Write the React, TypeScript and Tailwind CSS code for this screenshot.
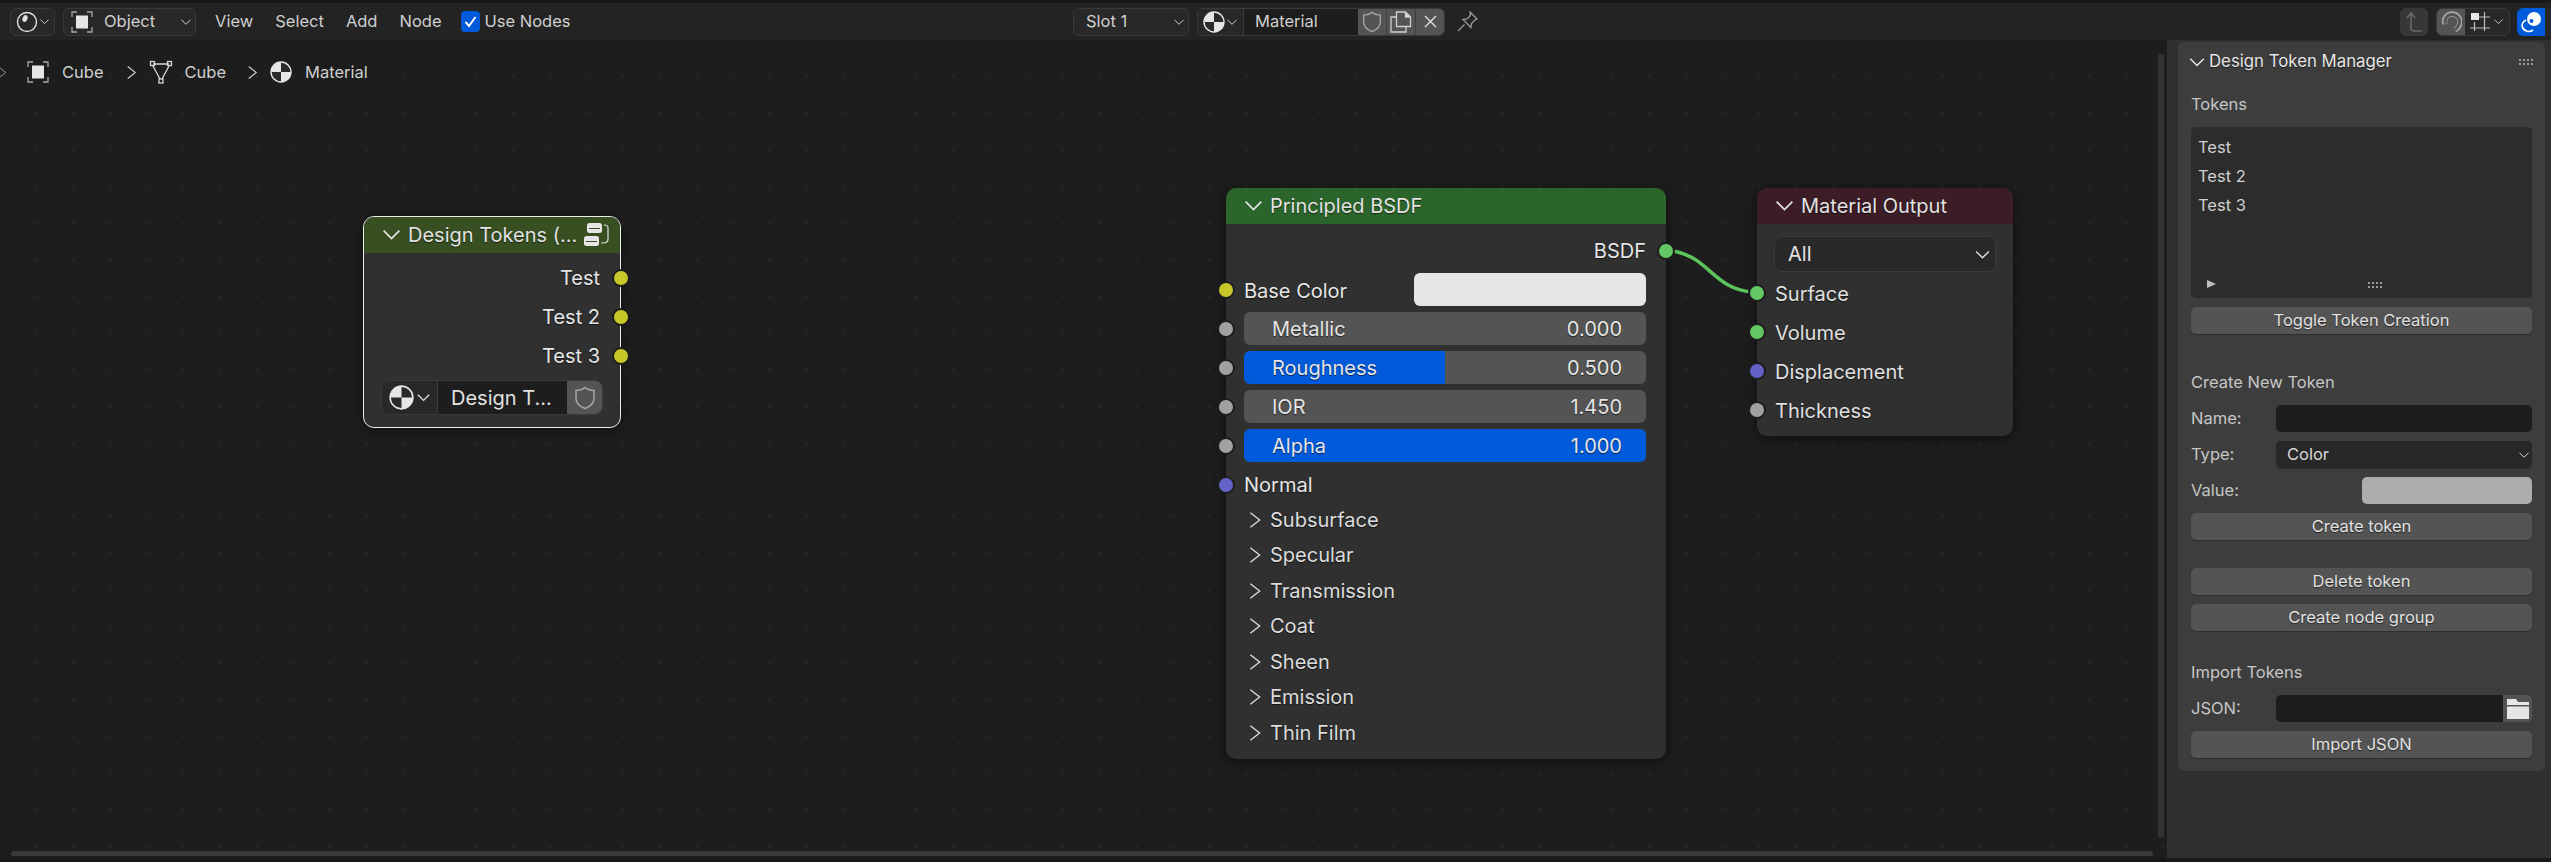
import type { ReactNode } from "react";

const shadow = "[text-shadow:0_1px_1px_rgba(0,0,0,0.6)]";

function Chevron({ dir = "down", size = 12, className = "" }: { dir?: "down" | "right"; size?: number; className?: string }) {
  return (
    <svg width={size} height={size} viewBox="0 0 12 12" fill="none" stroke="currentColor" strokeWidth="1" className={`shrink-0 ${className}`}>
      {dir === "down" ? <path d="M1.5 3.8 6 8.3l4.5-4.5" /> : <path d="M2.5.5 9.500 6l-7 5.500" />}
    </svg>
  );
}

function ObjectIcon() {
  return (
    <svg width="22" height="22" viewBox="0 0 22 22" fill="none" stroke="#a8a8a8" strokeWidth="1.3" className="shrink-0">
      <rect x="5" y="4.5" width="12" height="13" fill="#e6e6e6" stroke="none" />
      <path d="M1 6V1h5M16 1h5v5M1 16v5h5M16 21h5v-5" />
    </svg>
  );
}

function EditorIcon() {
  return (
    <svg width="22" height="22" viewBox="0 0 22 22" fill="none" stroke="#e0e0e0" strokeWidth="1.4" className="shrink-0">
      <circle cx="11" cy="11" r="9.5" />
      <ellipse cx="9" cy="7.5" rx="2.5" ry="3.5" fill="#e0e0e0" stroke="none" transform="rotate(20 9 7.5)" />
    </svg>
  );
}

function MeshIcon() {
  return (
    <svg width="24" height="24" viewBox="0 0 24 24" fill="none" stroke="#d8d8d8" strokeWidth="1.3" className="shrink-0">
      <path d="M4 4h16M4 6l7 13M20 6l-7 13" />
      <rect x="1.5" y="1.5" width="4" height="4" />
      <rect x="18.5" y="1.5" width="4" height="4" />
      <rect x="10" y="19" width="4" height="4" />
    </svg>
  );
}

function MaterialIcon({ size = 22 }: { size?: number }) {
  return (
    <svg width={size} height={size} viewBox="0 0 22 22" className="shrink-0">
      <circle cx="11" cy="11" r="10" fill="#2a2a2a" stroke="#e6e6e6" strokeWidth="1.4" />
      <path d="M11 11V1A10 10 0 0 0 1 11zM11 11v10a10 10 0 0 0 10-10z" fill="#e6e6e6" />
    </svg>
  );
}

function ShieldIcon({ size = 22 }: { size?: number }) {
  return (
    <svg width={size} height={size} viewBox="0 0 22 24" fill="none" stroke="#a6a6a6" strokeWidth="1.5" className="shrink-0">
      <path d="M11 1.5c2.5 2 6 3 9 3v8c0 4.5-4 8-9 10-5-2-9-5.500-9-10v-8c3 0 6.500-1 9-3z" />
    </svg>
  );
}

function CopyIcon() {
  return (
    <svg width="22" height="22" viewBox="0 0 22 22" fill="none" stroke="#d0d0d0" strokeWidth="1.3" className="shrink-0">
      <path d="M6.500 15.500V1h9l5 5v9.500z" />
      <path d="M15.500 1v5h5" fill="#d0d0d0" />
      <path d="M6.500 6H1v15h15v-5.500" />
    </svg>
  );
}

function CloseIcon() {
  return (
    <svg width="13" height="13" viewBox="0 0 13 13" fill="none" stroke="#e0e0e0" strokeWidth="1.4" className="shrink-0">
      <path d="M1 1l11 11M12 1 1 12" />
    </svg>
  );
}

function PinIcon() {
  return (
    <svg width="21" height="21" viewBox="0 0 21 21" fill="none" stroke="#9a9a9a" strokeWidth="1.3" className="shrink-0">
      <path d="M13 1l7 7-2 1-3.500 3.500-.5 4-8-8 4-.5L13.500 4.500z" />
      <path d="M7.500 13.500 1 20" />
    </svg>
  );
}

function GroupIcon() {
  return (
    <svg width="26" height="26" viewBox="0 0 26 26" fill="none" className="shrink-0">
      <rect x="4" y="1" width="15" height="10" rx="2.500" fill="#e6e6e6" />
      <rect x="1" y="14" width="15" height="10" rx="2.500" fill="#e6e6e6" />
      <path d="M6 6.500h11M3 19.500h11" stroke="#384f22" strokeWidth="1.200" />
      <path d="M21 3c3 0 4 1 4 3v11c0 3-2 4-5 4h-2" stroke="#e0e0e0" strokeWidth="1.200" />
    </svg>
  );
}

function Grip() {
  return (
    <div className="grid grid-cols-4 gap-x-[2px] gap-y-[2px]">
      {Array.from({ length: 8 }).map((_, i) => (
        <span key={i} className="h-[2px] w-[2px] bg-[#9a9a9a]" />
      ))}
    </div>
  );
}

function Socket({ color, className }: { color: string; className: string }) {
  return (
    <span
      className={`absolute top-1/2 h-[18px] w-[18px] -translate-y-1/2 rounded-full border-[2px] border-[#1d1d1d] ${className}`}
      style={{ backgroundColor: color }}
    />
  );
}

const yellow = "#c7c729";
const gray = "#a1a1a1";
const purple = "#6363c7";
const green = "#63c763";

function NodeHeader({ color, title, children }: { color: string; title: string; children?: ReactNode }) {
  return (
    <div
      className={`flex h-9 items-center gap-[6px] rounded-t-[10px] pb-px pl-[17px] pr-[14px] text-[20px] text-[#e2e2e2] ${shadow}`}
      style={{ backgroundColor: color }}
    >
      <Chevron size={21} />
      <span className="flex-1 whitespace-nowrap">{title}</span>
      {children}
    </div>
  );
}

function Slider({ label, value, fill }: { label: string; value: string; fill: number }) {
  return (
    <div className="relative h-[33px] rounded-[6px] bg-[#545454]">
      <div className="absolute inset-0 overflow-hidden rounded-[6px]">
        <div className="h-full bg-[#005ada]" style={{ width: `${fill * 100}%` }} />
      </div>
      <div className={`relative flex h-full items-center justify-between pl-7 pr-6 pt-px text-[#e6e6e6] ${shadow}`}>
        <span>{label}</span>
        <span>{value}</span>
      </div>
      <Socket color={gray} className="left-[-27px]" />
    </div>
  );
}

function DesignTokensNode() {
  return (
    <div className="absolute left-[363px] top-[176px] h-[212px] w-[258px] rounded-[11px] border-[1.5px] border-[#ececec] bg-[#303030] shadow-[0_2px_10px_rgba(0,0,0,0.5)]">
      <NodeHeader color="#384f22" title="Design Tokens (...">
        <GroupIcon />
      </NodeHeader>
      <div className={`flex flex-col items-end pr-5 pt-[5px] text-[20px] text-[#e6e6e6] ${shadow}`}>
        {["Test", "Test 2", "Test 3"].map((t) => (
          <div key={t} className="relative flex h-[39px] w-full items-center justify-end">
            <span>{t}</span>
            <Socket color={yellow} className="right-[-30px]" />
          </div>
        ))}
      </div>
      <div className="mx-[17px] mt-[5px] flex h-[35px] overflow-hidden rounded-[8px] border border-[#3a3a3a] text-[20px] text-[#e2e2e2]">
        <div className="flex w-[55px] items-center justify-center gap-[2px] bg-[#282828]">
          <MaterialIcon size={25} />
          <Chevron size={15} />
        </div>
        <div className="flex flex-1 items-center border-l border-[#3a3a3a] bg-[#1d1d1d] pl-[13px]">Design T...</div>
        <div className="flex w-[35px] items-center justify-center bg-[#545454]">
          <ShieldIcon size={24} />
        </div>
      </div>
    </div>
  );
}

function PrincipledNode() {
  const panels = ["Subsurface", "Specular", "Transmission", "Coat", "Sheen", "Emission", "Thin Film"];
  return (
    <div className="absolute left-[1226px] top-[148px] h-[571px] w-[440px] rounded-[10px] bg-[#303030] text-[20px] shadow-[0_2px_12px_rgba(0,0,0,0.55)]">
      <NodeHeader color="#2b652b" title="Principled BSDF" />
      <div className={`flex flex-col gap-[6px] pl-[18px] pr-5 pt-[10px] text-[#e6e6e6] ${shadow}`}>
        <div className="relative flex h-[33px] items-center justify-end pt-px">
          <span>BSDF</span>
          <Socket color={green} className="right-[-29px]" />
        </div>
        <div className="relative flex h-[33px] items-center justify-between pt-[2px]">
          <span>Base Color</span>
          <div className="-mt-[2px] h-[33px] w-[232px] rounded-[6px] bg-[#e6e6e6]" />
          <Socket color={yellow} className="left-[-27px]" />
        </div>
        <Slider label="Metallic" value="0.000" fill={0} />
        <Slider label="Roughness" value="0.500" fill={0.5} />
        <Slider label="IOR" value="1.450" fill={0} />
        <Slider label="Alpha" value="1.000" fill={1} />
        <div className="relative flex h-[33px] items-center pt-px">
          <span>Normal</span>
          <Socket color={purple} className="left-[-27px]" />
        </div>
      </div>
      <div className={`mt-px flex flex-col pl-[21px] text-[#dcdcdc] ${shadow}`}>
        {panels.map((p) => (
          <div key={p} className="flex h-[35.5px] items-center gap-[7px]">
            <Chevron dir="right" size={16} />
            <span>{p}</span>
          </div>
        ))}
      </div>
    </div>
  );
}

function OutputNode() {
  return (
    <div className="absolute left-[1757px] top-[148px] h-[248px] w-[256px] rounded-[10px] bg-[#303030] text-[20px] shadow-[0_2px_12px_rgba(0,0,0,0.55)]">
      <NodeHeader color="#3c1d26" title="Material Output" />
      <div className="mx-[17px] mt-3 flex h-[36px] items-center justify-between rounded-[8px] border border-[#3a3a3a] bg-[#282828] pl-[13px] pr-[4px] text-[#e2e2e2]">
        <span>All</span>
        <Chevron size={17} />
      </div>
      <div className={`mt-[1px] flex flex-col pl-[18px] text-[#e0e0e0] ${shadow}`}>
        {[
          ["Surface", green],
          ["Volume", green],
          ["Displacement", purple],
          ["Thickness", gray],
        ].map(([label, color]) => (
          <div key={label} className="relative flex h-[39px] items-center pt-[2px]">
            <span>{label}</span>
            <Socket color={color} className="left-[-27px]" />
          </div>
        ))}
      </div>
    </div>
  );
}

function HeaderBar() {
  return (
    <header className="flex h-[37px] items-center bg-[#232323] text-[16.500px] text-[#cfcfcf]">
      <div className="flex w-[1073px] items-center pl-[10px]">
        <div className="flex h-7 w-[45px] items-center justify-center gap-[1px] rounded-[6px] border border-[#393939] bg-[#282828]">
          <EditorIcon />
          <Chevron size={11} />
        </div>
        <div className="ml-2 flex h-7 w-[133px] items-center rounded-[6px] border border-[#393939] bg-[#282828] pl-[7px] pr-[3px]">
          <ObjectIcon />
          <span className="ml-[11px] flex-1">Object</span>
          <Chevron size={12} />
        </div>
        <nav className="ml-[19px] flex gap-[22px]">
          <span>View</span>
          <span>Select</span>
          <span>Add</span>
          <span>Node</span>
        </nav>
        <div className="ml-[19px] flex h-[21px] w-[19px] items-center justify-center rounded-[4px] bg-[#005ada]">
          <svg width="13" height="13" viewBox="0 0 13 13" fill="none" stroke="#fff" strokeWidth="2">
            <path d="M1.500 7l3.500 4 6.500-9" />
          </svg>
        </div>
        <span className="ml-[5px]">Use Nodes</span>
      </div>
      <div className="flex h-7 w-[116px] items-center justify-between rounded-[6px] border border-[#393939] bg-[#282828] pl-3 pr-[3px]">
        <span>Slot 1</span>
        <Chevron size={12} />
      </div>
      <div className="ml-2 flex h-7 w-[248px] overflow-hidden rounded-[6px] border border-[#393939]">
        <div className="flex w-[45px] items-center justify-center gap-[1px] bg-[#282828]">
          <MaterialIcon />
          <Chevron size={12} />
        </div>
        <div className="flex w-[115px] items-center border-l border-[#393939] bg-[#1d1d1d] pl-[11px]">Material</div>
        <div className="flex flex-1 bg-[#545454]">
          <div className="flex flex-1 items-center justify-center"><ShieldIcon /></div>
          <div className="flex flex-1 items-center justify-center border-l border-[#3f3f3f]"><CopyIcon /></div>
          <div className="flex flex-1 items-center justify-center border-l border-[#3f3f3f]"><CloseIcon /></div>
        </div>
      </div>
      <div className="ml-3"><PinIcon /></div>
      <div className="ml-auto flex items-center">
        <div className="flex h-7 w-7 items-center justify-center rounded-[6px] bg-[#373737]">
          <svg width="20" height="22" viewBox="0 0 20 22" fill="none" stroke="#6a6a6a" strokeWidth="1.500">
            <path d="M3 7l4-5 4 5M7 2v15c0 2 1 3 3 3h8" />
          </svg>
        </div>
        <div className="ml-2 flex h-7 w-[74px] overflow-hidden rounded-[6px] border border-[#393939] bg-[#282828]">
          <div className="flex w-7 items-center justify-center bg-[#545454]">
            <svg width="22" height="22" viewBox="0 0 22 22" fill="none">
              <path d="M5 13C3 7 8 3 12 3c5 0 8 4 8 8 0 3-2 6-5 8" stroke="#a6a6a6" strokeWidth="5.500" />
              <path d="M5.400 12.500C4 7.500 8 3.500 12 3.500c4.500 0 7.500 3.500 7.500 7.500 0 3-2 5.500-4.500 7.500" stroke="#545454" strokeWidth="3" />
            </svg>
          </div>
          <div className="flex flex-1 items-center justify-center gap-[2px]">
            <svg width="21" height="20" viewBox="0 0 21 20" fill="none" stroke="#bdbdbd" strokeWidth="1.200">
              <rect x="1" y="1" width="8" height="7" fill="#e6e6e6" stroke="none" />
              <path d="M9 5h11M0 16h20M4.500 10v9M14.500 0v19" />
            </svg>
            <Chevron size={11} />
          </div>
        </div>
        <div className="ml-[7px] flex h-7 w-[34px] overflow-hidden rounded-l-[6px]">
          <div className="flex w-7 items-center justify-center bg-[#005ada]">
            <svg width="22" height="22" viewBox="0 0 22 22" fill="none" stroke="#fff" strokeWidth="1.600">
              <path d="M2 15a7 7 0 0 0 11 4" />
              <path d="M2 15a7 7 0 0 1 4-6" />
              <circle cx="14" cy="8" r="7" fill="#fff" stroke="none" />
              <circle cx="11.500" cy="10" r="2" fill="#005ada" stroke="none" />
            </svg>
          </div>
          <div className="flex-1 bg-[#282828]" />
        </div>
      </div>
    </header>
  );
}

function Breadcrumbs() {
  return (
    <div className="absolute left-0 top-[21px] flex h-[22px] items-center text-[16.500px] text-[#cfcfcf]">
      <Chevron dir="right" size={11} className="-ml-[3px] text-[#9a9a9a]" />
      <div className="ml-[19px]"><ObjectIcon /></div>
      <span className="ml-[13px]">Cube</span>
      <Chevron dir="right" size={13} className="ml-[21px]" />
      <div className="ml-[11px]"><MeshIcon /></div>
      <span className="ml-[12px]">Cube</span>
      <Chevron dir="right" size={13} className="ml-[20px]" />
      <div className="ml-[11px]"><MaterialIcon /></div>
      <span className="ml-[13px]">Material</span>
    </div>
  );
}

function Button({ label }: { label: string }) {
  return (
    <div className={`flex h-[27px] items-center justify-center rounded-[5px] bg-[#545454] text-[#e2e2e2] shadow-[0_1px_1px_rgba(0,0,0,0.25)] ${shadow}`}>
      {label}
    </div>
  );
}

function FieldRow({ label, children }: { label: string; children: ReactNode }) {
  return (
    <div className="flex h-[27px] items-center">
      <span className="w-[85px] shrink-0 text-[#c6c6c6]">{label}</span>
      <div className="flex h-full flex-1 justify-end">{children}</div>
    </div>
  );
}

function Sidebar() {
  return (
    <aside className="w-[384px] shrink-0 bg-[#303030] pl-[11px] pr-[6px] pt-[2px]">
      <div className="flex flex-col rounded-[6px] bg-[#3d3d3d] px-[13px] pb-[13px] text-[16.500px]">
        <div className={`-mx-[1px] flex h-[38px] items-center pt-[2px] text-[16.800px] text-[#e6e6e6] ${shadow}`}>
          <Chevron size={18} className="-ml-[2px]" />
          <span className="ml-[3px] flex-1">Design Token Manager</span>
          <Grip />
        </div>
        <div className="mt-[11px] flex h-[27px] items-center text-[#c6c6c6]">Tokens</div>
        <div className="relative mt-[9px] h-[171px] rounded-[5px] bg-[#2c2c2c] pl-[7px] pt-[6px] text-[#cfcfcf]">
          <div className="flex h-[29px] items-center">Test</div>
          <div className="flex h-[29px] items-center">Test 2</div>
          <div className="flex h-[29px] items-center">Test 3</div>
          <div className="absolute bottom-[10px] left-4 h-0 w-0 border-y-[4px] border-l-[9px] border-y-transparent border-l-[#bdbdbd]" />
          <div className="absolute bottom-[10px] left-[177px]"><Grip /></div>
        </div>
        <div className="mt-[9px]"><Button label="Toggle Token Creation" /></div>
        <div className="mt-[35px] flex h-[27px] items-center text-[#c6c6c6]">Create New Token</div>
        <div className="mt-[9px] flex flex-col gap-[9px]">
          <FieldRow label="Name:">
            <div className="w-full rounded-[5px] bg-[#1d1d1d]" />
          </FieldRow>
          <FieldRow label="Type:">
            <div className="flex w-full items-center justify-between rounded-[5px] bg-[#282828] pl-[11px] pr-[2px] text-[#d8d8d8] shadow-[0_1px_1px_rgba(0,0,0,0.25)]">
              <span>Color</span>
              <Chevron size={12} />
            </div>
          </FieldRow>
          <FieldRow label="Value:">
            <div className="w-[170px] rounded-[5px] bg-[#adadad]" />
          </FieldRow>
          <Button label="Create token" />
        </div>
        <div className="mt-[28px] flex flex-col gap-[9px]">
          <Button label="Delete token" />
          <Button label="Create node group" />
        </div>
        <div className="mt-[28px] flex h-[27px] items-center text-[#c6c6c6]">Import Tokens</div>
        <div className="mt-[9px] flex flex-col gap-[9px]">
          <FieldRow label="JSON:">
            <div className="flex w-full overflow-hidden rounded-[5px]">
              <div className="flex-1 bg-[#1d1d1d]" />
              <div className="flex w-[29px] items-center justify-center bg-[#545454]">
                <svg width="22" height="20" viewBox="0 0 22 20" fill="#e6e6e6">
                  <path d="M0 0h9l2 3h11v3H0zM0 7.500h22V20H0z" />
                </svg>
              </div>
            </div>
          </FieldRow>
          <Button label="Import JSON" />
        </div>
      </div>
    </aside>
  );
}

export default function App() {
  return (
    <div className="flex h-[862px] w-[2551px] flex-col overflow-hidden bg-[#181818] font-['Inter',sans-serif]">
      <div className="h-[3px] shrink-0" />
      <HeaderBar />
      <main className="flex h-[818px] shrink-0">
        <div className="relative flex-1 bg-[#1d1d1d] bg-[radial-gradient(circle,#272727_1px,transparent_1.5px)] bg-[size:36.67px_36.67px] bg-[position:-18.33px_-18.33px]">
          <Breadcrumbs />
          <svg className="absolute left-[1660px] top-[200px]" width="100" height="60" fill="none">
            <path d="M6 10C50 14 50 48 92 52" stroke="#5cc45c" strokeWidth="3.500" />
          </svg>
          <DesignTokensNode />
          <PrincipledNode />
          <OutputNode />
          <div className="absolute bottom-[2px] left-[11px] h-[5px] w-[2142px] rounded-full bg-[#3a3a3a]" />
          <div className="absolute right-[3px] top-[14px] h-[784px] w-[6px] rounded-full bg-[#333333]" />
        </div>
        <Sidebar />
      </main>
    </div>
  );
}
